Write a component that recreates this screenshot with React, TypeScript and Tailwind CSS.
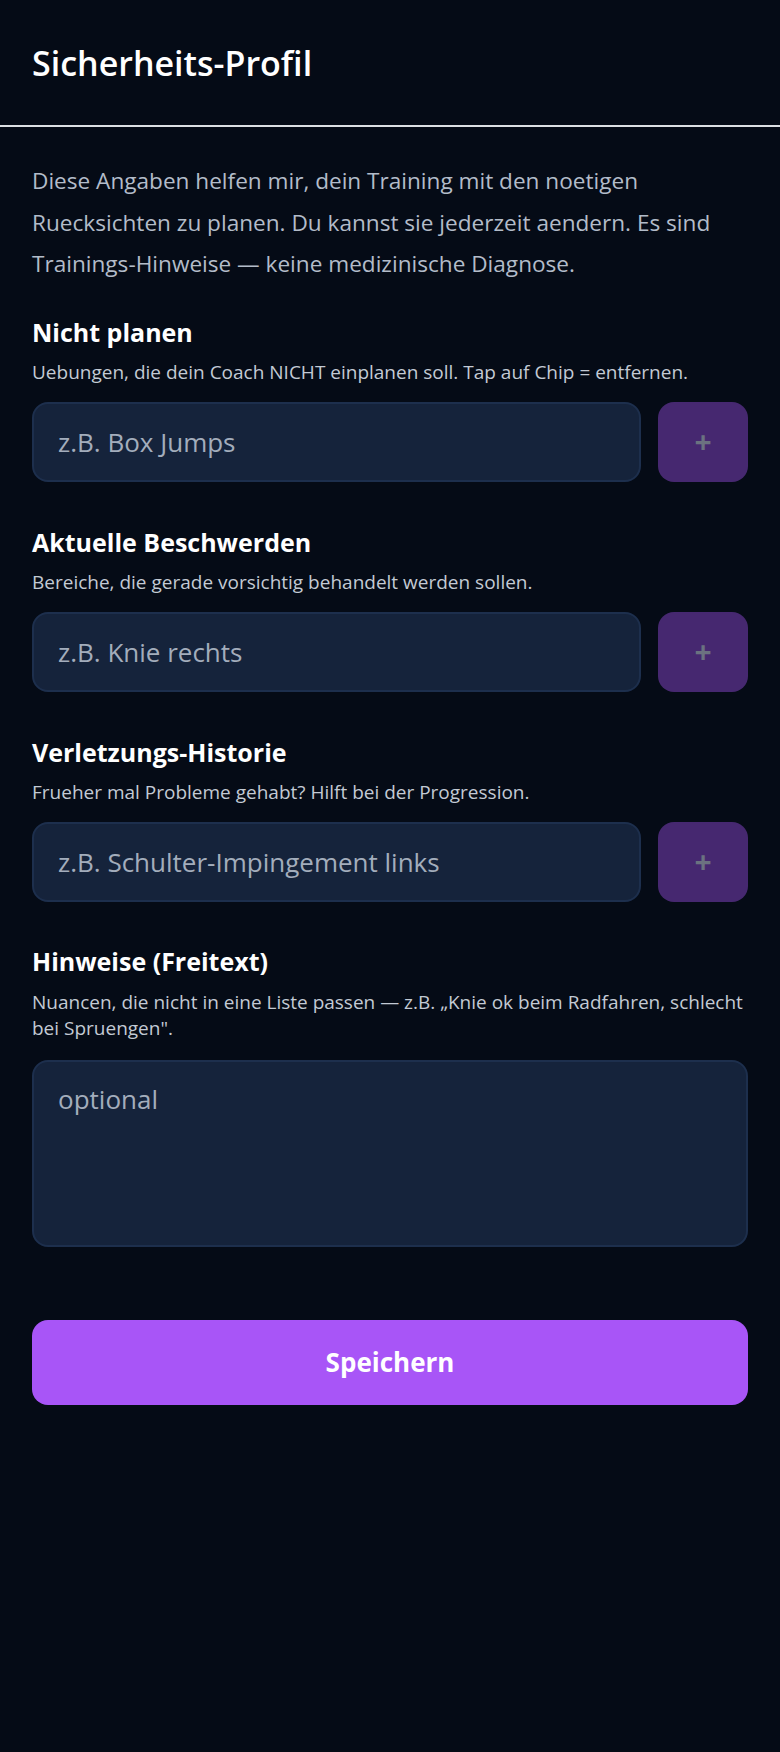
import { useState } from "react";

type ListSectionProps = {
  title: string;
  hint: string;
  placeholder: string;
};

function ListSection({ title, hint, placeholder }: ListSectionProps) {
  const [value, setValue] = useState("");

  return (
    <section className="mt-[44px]">
      <h2 className="text-[25px] leading-[32px] font-bold text-white">{title}</h2>
      <p className="mt-[11px] text-[19px] leading-[26px] text-[#c3cad4]">{hint}</p>
      <div className="mt-[17px] flex gap-[17px]">
        <input
          value={value}
          onChange={(e) => setValue(e.target.value)}
          placeholder={placeholder}
          className="h-[80px] min-w-0 flex-1 rounded-2xl border-2 border-[#1d2f4d] bg-[#15233b] px-6 text-[26px] text-white placeholder:text-[#a3adbc] outline-none"
        />
        <button
          type="button"
          disabled={!value.trim()}
          className="h-[80px] w-[90px] shrink-0 rounded-2xl bg-[#a855f7]/40 text-[30px] font-bold leading-none text-[#6b7280]"
        >
          +
        </button>
      </div>
    </section>
  );
}

export default function App() {
  const [notes, setNotes] = useState("");

  return (
    <div
      className="min-h-[1752px] bg-[#050b16] text-white"
      style={{ fontFamily: "'Open Sans', 'Noto Sans', sans-serif" }}
    >
      <header className="flex h-[127px] items-center border-b-2 border-[#dcdfe3] px-8 pt-[2px]">
        <h1 className="text-[34px] font-semibold text-white">Sicherheits-Profil</h1>
      </header>

      <main className="px-8 pt-[33px]">
        <p className="text-[22.6px] leading-[41.5px] text-[#b3bcc9]">
          Diese Angaben helfen mir, dein Training mit den noetigen Ruecksichten zu planen. Du
          kannst sie jederzeit aendern. Es sind Trainings-Hinweise — keine medizinische Diagnose.
        </p>

        <div className="-mt-[13px]">
          <ListSection
            title="Nicht planen"
            hint="Uebungen, die dein Coach NICHT einplanen soll. Tap auf Chip = entfernen."
            placeholder="z.B. Box Jumps"
          />
          <ListSection
            title="Aktuelle Beschwerden"
            hint="Bereiche, die gerade vorsichtig behandelt werden sollen."
            placeholder="z.B. Knie rechts"
          />
          <ListSection
            title="Verletzungs-Historie"
            hint="Frueher mal Probleme gehabt? Hilft bei der Progression."
            placeholder="z.B. Schulter-Impingement links"
          />

          <section className="mt-[43px]">
            <h2 className="text-[25px] leading-[32px] font-bold text-white">Hinweise (Freitext)</h2>
            <p className="mt-[12px] text-[19px] leading-[26px] text-[#c3cad4]">
              Nuancen, die nicht in eine Liste passen — z.B. „Knie ok beim Radfahren, schlecht bei
              Spruengen".
            </p>
            <textarea
              value={notes}
              onChange={(e) => setNotes(e.target.value)}
              placeholder="optional"
              className="mt-[19px] block h-[187px] w-full resize-none rounded-2xl border-2 border-[#1d2f4d] bg-[#15233b] px-6 py-[22px] text-[26px] leading-[30px] text-white placeholder:text-[#a3adbc] outline-none"
            />
          </section>

          <button
            type="button"
            className="mt-[73px] h-[85px] w-full rounded-2xl bg-[#a855f7] text-[26px] font-bold text-white"
          >
            Speichern
          </button>
        </div>
      </main>
    </div>
  );
}
